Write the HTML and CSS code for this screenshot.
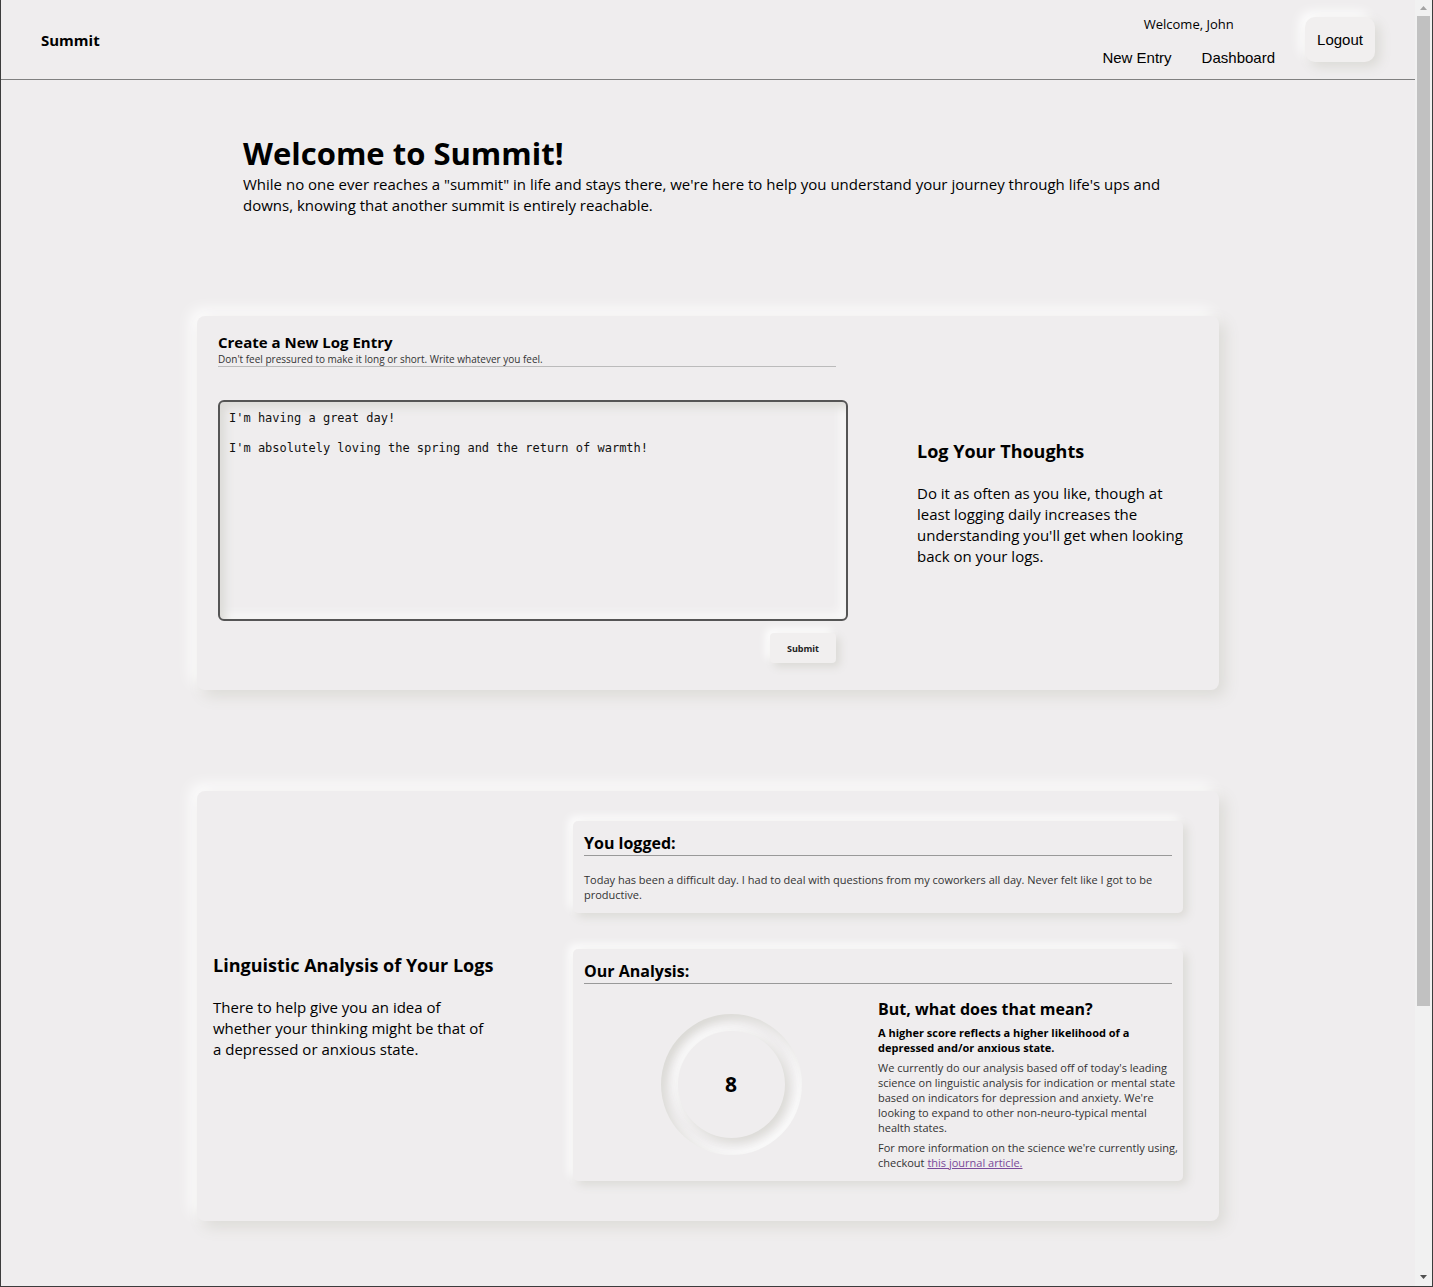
FILE: index.html
```html
<!DOCTYPE html>
<html lang="en">
<head>
<meta charset="utf-8">
<title>Summit</title>
<link rel="stylesheet" href="styles.css">
</head>
<body>
<div class="window">
  <div class="page">
    <header class="header">
      <a class="brand" href="#">Summit</a>
      <div class="account">
        <div class="account-main">
          <p class="greeting">Welcome, John</p>
          <nav class="nav">
            <a href="#">New Entry</a>
            <a href="#">Dashboard</a>
          </nav>
        </div>
        <button class="logout" type="button">Logout</button>
      </div>
    </header>
    <main class="content">
      <section class="intro">
        <h1>Welcome to Summit!</h1>
        <p>While no one ever reaches a "summit" in life and stays there, we're here to help you understand your journey through life's ups and downs, knowing that another summit is entirely reachable.</p>
      </section>

      <section class="card feature">
        <form class="entry">
          <div class="entry-head">
            <h2><label for="log">Create a New Log Entry</label></h2>
            <p>Don't feel pressured to make it long or short. Write whatever you feel.</p>
          </div>
          <textarea id="log" class="entry-text" spellcheck="false">I'm having a great day!

I'm absolutely loving the spring and the return of warmth!</textarea>
          <button class="submit" type="button">Submit</button>
        </form>
        <div class="copy">
          <h3>Log Your Thoughts</h3>
          <p>Do it as often as you like, though at least logging daily increases the understanding you'll get when looking back on your logs.</p>
        </div>
      </section>

      <section class="card feature feature-reverse">
        <div class="copy">
          <h3>Linguistic Analysis of Your Logs</h3>
          <p>There to help give you an idea of whether your thinking might be that of a depressed or anxious state.</p>
        </div>
        <div class="report">
          <article class="panel">
            <h2>You logged:</h2>
            <p class="logged">Today has been a difficult day. I had to deal with questions from my coworkers all day. Never felt like I got to be productive.</p>
          </article>
          <article class="panel">
            <h2>Our Analysis:</h2>
            <div class="analysis">
              <div class="dial"><div class="dial-face">8</div></div>
              <div class="meaning">
                <h3>But, what does that mean?</h3>
                <p class="strong">A higher score reflects a higher likelihood of a depressed and/or anxious state.</p>
                <p>We currently do our analysis based off of today's leading science on linguistic analysis for indication or mental state based on indicators for depression and anxiety. We're looking to expand to other non-neuro-typical mental health states.</p>
                <p>For more information on the science we're currently using, checkout <a href="#">this journal article.</a></p>
              </div>
            </div>
          </article>
        </div>
      </section>
    </main>
  </div>
  <div class="scrollbar" aria-hidden="true">
    <svg width="17" height="16" viewBox="0 0 17 16"><path d="M5 10h7L8.500 6z" fill="#a3a3a3"/></svg>
    <div class="track"><div class="thumb"></div></div>
    <svg width="17" height="17" viewBox="0 0 17 17"><path d="M5 6h7L8.500 10z" fill="#505050"/></svg>
  </div>
</div>
</body>
</html>
```
FILE: styles.css
```css
* {
  box-sizing: border-box;
  margin: 0;
  padding: 0;
}

:root {
  --bg: #efedee;
  --dark: #dbdad6;
  --light: #ffffff;
}

body {
  background: var(--bg);
  color: #000;
  font-family: "Open Sans", "Noto Sans", sans-serif;
  font-size: 15px;
  line-height: 21px;
}

.window {
  display: flex;
  min-height: 100vh;
  border: 1px solid #3c3c3c;
  border-top: 0;
}

.page {
  flex: 1;
  min-width: 0;
}

.header {
  display: flex;
  justify-content: space-between;
  align-items: center;
  height: 80px;
  padding: 0 40px;
  border-bottom: 1px solid #808080;
}

.brand,
.account-main {
  padding-top: 2px;
}

.brand {
  color: #000;
  font-weight: 700;
  text-decoration: none;
}

.account {
  display: flex;
  align-items: center;
  gap: 30px;
}

.account-main {
  display: flex;
  flex-direction: column;
  align-items: center;
  gap: 12px;
}

.greeting {
  font-size: 13px;
}

.nav {
  display: flex;
  gap: 30px;
  font-family: "Liberation Sans", Arial, sans-serif;
}

.nav a {
  color: #000;
  text-decoration: none;
}

.logout {
  width: 70px;
  height: 45px;
  border: 0;
  border-radius: 10px;
  background: #f1efef;
  box-shadow: 5px 5px 12px var(--dark), -5px -5px 12px var(--light);
  color: #000;
  font-family: "Liberation Sans", Arial, sans-serif;
  font-size: 15px;
}

.content {
  padding: 53px 0 60px;
}

.intro {
  max-width: 930px;
  margin: 0 auto 100px;
}

.intro h1 {
  font-size: 31px;
  line-height: 41px;
}

.card {
  max-width: 1022px;
  margin: 0 auto;
  border-radius: 8px;
  background: var(--bg);
  box-shadow: 6px 6px 15px var(--dark), -6px -6px 15px var(--light);
}

.card + .card {
  margin-top: 101px;
}

.feature {
  display: grid;
  grid-template-columns: 640px 1fr;
  align-items: center;
  gap: 64px;
  padding: 16px;
}

.feature-reverse {
  grid-template-columns: 1fr 640px;
}

.copy h3 {
  margin-bottom: 20px;
  font-size: 18px;
  line-height: 24px;
}

.copy p {
  max-width: 280px;
}

.entry {
  display: flex;
  flex-direction: column;
  padding: 0 5px 11px;
}

.entry-head {
  margin: 0 12px 33px 0;
  border-bottom: 1px solid #bbb;
}

.entry-head h2 {
  font-size: 15px;
  line-height: 20px;
}

.entry-head p {
  color: #333;
  font-size: 10px;
  line-height: 14px;
}

.entry-text {
  height: 221px;
  padding: 9px;
  border: 2px solid #555;
  border-radius: 6px;
  background: var(--bg);
  box-shadow: inset 5px 5px 10px var(--dark), inset -5px -5px 10px #fafafa;
  color: #111;
  font-family: "DejaVu Sans Mono", monospace;
  font-size: 12px;
  line-height: 15px;
  resize: none;
}

.submit {
  align-self: flex-end;
  width: 66px;
  height: 30px;
  margin: 12px 12px 0 0;
  border: 0;
  border-radius: 4px;
  background: #f1efef;
  box-shadow: 4px 4px 8px var(--dark), -4px -4px 8px var(--light);
  color: #222;
  font-family: inherit;
  font-size: 9px;
  font-weight: 700;
}

.report {
  display: flex;
  flex-direction: column;
  gap: 36px;
  padding: 14px 20px 24px 10px;
}

.panel {
  padding: 11px;
  border-radius: 5px;
  background: var(--bg);
  box-shadow: 4px 4px 10px var(--dark), -4px -4px 10px var(--light);
  color: #333;
  font-size: 11px;
  line-height: 15px;
}

.panel h2 {
  border-bottom: 1px solid #999;
  color: #000;
  font-size: 16px;
  line-height: 23px;
}

.logged {
  margin-top: 16px;
}

.analysis {
  display: grid;
  grid-template-columns: 1fr 1fr;
  align-items: center;
  padding-top: 14px;
}

.dial {
  display: grid;
  place-items: center;
  justify-self: center;
  width: 141px;
  height: 141px;
  border-radius: 50%;
  box-shadow: inset 5px 5px 8px var(--dark), inset -5px -5px 8px #fafafa;
}

.dial-face {
  display: grid;
  place-items: center;
  width: 107px;
  height: 107px;
  border-radius: 50%;
  background: var(--bg);
  box-shadow: 4px 4px 8px var(--dark), -4px -4px 8px #fafafa;
  color: #000;
  font-size: 21px;
  font-weight: 700;
}

.meaning {
  display: flex;
  flex-direction: column;
  gap: 5px;
  margin-right: -8px;
}

.meaning h3 {
  color: #000;
  font-size: 16px;
  line-height: 22px;
}

.meaning .strong {
  color: #000;
  font-weight: 700;
}

.meaning a {
  color: #7a4a9a;
}

.scrollbar {
  display: flex;
  flex-direction: column;
  width: 17px;
  background: #f1f1f1;
}

.track {
  flex: 1;
  padding: 0 2px;
}

.thumb {
  height: 79%;
  background: #c1c1c1;
}
```
